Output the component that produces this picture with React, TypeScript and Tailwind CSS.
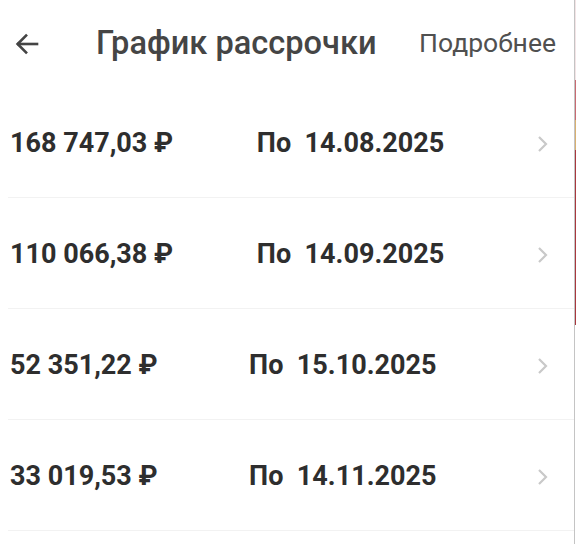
import React from "react";

const rows = [
  { amount: "168 747,03 ₽", date: "14.08.2025" },
  { amount: "110 066,38 ₽", date: "14.09.2025" },
  { amount: "52 351,22 ₽", date: "15.10.2025" },
  { amount: "33 019,53 ₽", date: "14.11.2025" },
];

export default function App() {
  return (
    <div
      className="flex w-[576px] h-[544px] bg-white overflow-hidden"
      style={{ fontFamily: "Roboto, 'Noto Sans', sans-serif" }}
    >
      <div className="flex-1 flex flex-col">
        <div className="h-[87px] flex items-center">
          <div className="w-[96px] pl-[12px] flex items-center">
            <svg width="30" height="30" viewBox="0 0 24 24" fill="none" stroke="#444" strokeWidth="2.1" strokeLinecap="square">
              <path d="M20 12H5" />
              <path d="M12 4.5L4.5 12L12 19.5" strokeLinecap="butt" />
            </svg>
          </div>
          <div className="flex-1 text-[32.6px] font-medium text-[#454545] leading-none">
            График рассрочки
          </div>
          <div className="pr-[18px] text-[26.5px] text-[#505050] leading-none">
            Подробнее
          </div>
        </div>
        {rows.map((r) => (
          <div key={r.date} className="h-[111px] flex items-center pt-[3px] border-b border-[#f2f2f2] ml-[8px]">
            <div className="pl-[2px] text-[27px] font-bold text-[#2e2e2e] leading-none whitespace-nowrap">
              {r.amount}
            </div>
            <div className="flex-1 flex justify-center text-[27px] font-bold text-[#2e2e2e] leading-none whitespace-pre">
              {"По  " + r.date}
            </div>
            <div className="w-[46px] flex justify-start pl-[8px]">
              <svg width="14" height="20" viewBox="0 0 14 20" fill="none" stroke="#c9c9c9" strokeWidth="2.2">
                <path d="M3 3l7 7-7 7" />
              </svg>
            </div>
          </div>
        ))}
      </div>
      <div className="w-[1px] bg-[#c4c4c4]" />
      <div className="w-[1px] flex flex-col">
        <div className="h-[80px] bg-[#f3e4e6]" />
        <div className="h-[40px] bg-[#c86a72]" />
        <div className="h-[30px] bg-[#d8b070]" />
        <div className="h-[175px] bg-[#a8383e]" />
        <div className="flex-1 bg-white" />
      </div>
    </div>
  );
}
